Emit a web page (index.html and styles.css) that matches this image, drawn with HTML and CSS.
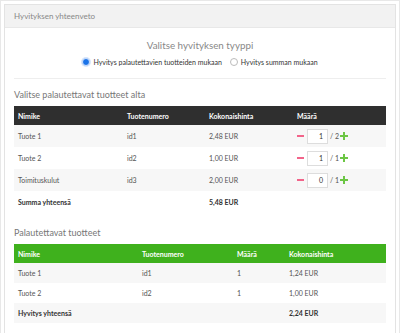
FILE: index.html
```html
<!DOCTYPE html>
<html>
<head>
  <meta charset="UTF-8">
  <title>Hyvityksen yhteenveto</title>
  <link rel="stylesheet" href="styles.css">
</head>
<body>
<div class="frame">
  <div class="panel">
    <div class="panelHead">Hyvityksen yhteenveto</div>
    <div class="panelBody">
      <h3 class="typeTitle">Valitse hyvityksen tyyppi</h3>
      <div class="radios">
        <label><span class="radio checked"></span>Hyvitys palautettavien tuotteiden mukaan</label>
        <label><span class="radio"></span>Hyvitys summan mukaan</label>
      </div>
      <hr>
      <h4>Valitse palautettavat tuotteet alta</h4>
      <table class="items select">
        <tr class="dark">
          <th class="c1">Nimike</th>
          <th class="c2">Tuotenumero</th>
          <th class="c3">Kokonaishinta</th>
          <th>Määrä</th>
        </tr>
        <tr class="odd">
          <td>Tuote 1</td><td>id1</td><td>2,48 EUR</td>
          <td><span class="qty"><span class="minus"></span><span class="box">1</span>/ 2<span class="plus"></span></span></td>
        </tr>
        <tr>
          <td>Tuote 2</td><td>id2</td><td>1,00 EUR</td>
          <td><span class="qty"><span class="minus"></span><span class="box">1</span>/ 1<span class="plus"></span></span></td>
        </tr>
        <tr class="odd">
          <td>Toimituskulut</td><td>id3</td><td>2,00 EUR</td>
          <td><span class="qty"><span class="minus"></span><span class="box">0</span>/ 1<span class="plus"></span></span></td>
        </tr>
        <tr class="sum">
          <td>Summa yhteensä</td><td></td><td>5,48 EUR</td><td></td>
        </tr>
      </table>
      <h4 class="second">Palautettavat tuotteet</h4>
      <table class="items result">
        <tr class="green">
          <th class="r1">Nimike</th>
          <th class="r2">Tuotenumero</th>
          <th class="r3">Määrä</th>
          <th>Kokonaishinta</th>
        </tr>
        <tr class="odd">
          <td>Tuote 1</td><td>id1</td><td>1</td><td>1,24 EUR</td>
        </tr>
        <tr>
          <td>Tuote 2</td><td>id2</td><td>1</td><td>1,00 EUR</td>
        </tr>
        <tr class="odd sum">
          <td>Hyvitys yhteensä</td><td></td><td></td><td>2,24 EUR</td>
        </tr>
      </table>
    </div>
  </div>
</div>
</body>
</html>
```
FILE: styles.css
```css
body {
  margin: 0;
  font-family: Lato, 'Open Sans', sans-serif;
  color: #555;
}
.frame {
  height: 331px;
  border: 1px solid #e8e8e8;
  padding: 3px 3px 0 3px;
  overflow: hidden;
}
.panel {
  border: 1px solid #e3e3e3;
  border-bottom: none;
  height: 330px;
}
.panelHead {
  background-color: #f2f2f2;
  border-bottom: 1px solid #e8e8e8;
  height: 22px;
  line-height: 22px;
  padding: 0 9px;
  font-size: 8px;
  color: #888;
}
.panelBody {
  padding: 0 9px;
}
.typeTitle {
  margin: 10px 0 0;
  text-align: center;
  font-weight: normal;
  font-size: 9.8px;
  line-height: 14px;
  color: #888;
}
.radios {
  display: flex;
  justify-content: center;
  gap: 8px;
  margin-top: 4px;
  font-size: 7px;
  line-height: 12px;
  color: #333;
}
.radios label {
  display: flex;
  align-items: center;
}
.radio {
  width: 6px;
  height: 6px;
  border: 1px solid #bbb;
  border-radius: 50%;
  margin-right: 3px;
  background: #fff;
}
.radio.checked {
  border-color: #cfe0fb;
  background: #1a73e8;
  box-shadow: 0 0 0 1px #d6e5fb;
}
hr {
  border: none;
  border-top: 1px solid #eee;
  margin: 10px 0 0;
}
h4 {
  margin: 9px 0 0;
  font-weight: normal;
  font-size: 9px;
  line-height: 14px;
  color: #777;
}
h4.second {
  margin-top: 14px;
}
.items {
  width: 100%;
  border-collapse: collapse;
  font-size: 7px;
  margin-top: 4px;
}
.items th {
  text-align: left;
  color: #fff;
  font-weight: bold;
  height: 19px;
  padding: 0 4px;
}
.items td {
  padding: 0 4px;
  color: #555;
}
.items tr.dark {
  background-color: #2f2f2f;
}
.items tr.green {
  background-color: #3fb11d;
}
.items tr.odd {
  background-color: #f7f7f7;
}
.items tr.sum td {
  font-weight: bold;
  color: #333;
}
.select td {
  height: 22px;
}
.select tr.sum td {
  height: 21px;
}
.result td {
  height: 20px;
}
.c1 { width: 101px; }
.c2 { width: 74px; }
.c3 { width: 80px; }
.r1 { width: 116px; }
.r2 { width: 87px; }
.r3 { width: 44px; }
.qty {
  display: flex;
  align-items: center;
  color: #555;
}
.minus {
  width: 7px;
  height: 2px;
  background: #f2648a;
  margin-right: 3px;
}
.box {
  width: 15px;
  height: 13px;
  border: 1px solid #ddd;
  background: #fff;
  text-align: right;
  line-height: 13px;
  padding-right: 4px;
  margin-right: 2px;
  color: #333;
}
.plus {
  position: relative;
  width: 8px;
  height: 8px;
  margin-left: 1px;
}
.plus:before,
.plus:after {
  content: '';
  position: absolute;
  background: #6cc644;
}
.plus:before {
  left: 0;
  top: 3px;
  width: 8px;
  height: 2px;
}
.plus:after {
  left: 3px;
  top: 0;
  width: 2px;
  height: 8px;
}
```
